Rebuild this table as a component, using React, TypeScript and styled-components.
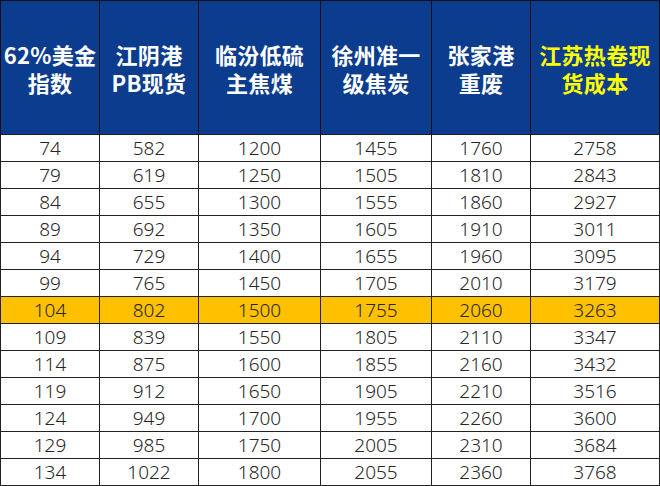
import styled, { createGlobalStyle } from "styled-components";

const GlobalStyle = createGlobalStyle`
  html, body {
    margin: 0;
    padding: 0;
    background: #ffffff;
  }
`;

const headers: string[][] = [
  ["62%美金", "指数"],
  ["江阴港", "PB现货"],
  ["临汾低硫", "主焦煤"],
  ["徐州准一", "级焦炭"],
  ["张家港", "重废"],
  ["江苏热卷现", "货成本"],
];

const widths = [99, 99, 122, 111, 99, 129];

const rows: number[][] = [
  [74, 582, 1200, 1455, 1760, 2758],
  [79, 619, 1250, 1505, 1810, 2843],
  [84, 655, 1300, 1555, 1860, 2927],
  [89, 692, 1350, 1605, 1910, 3011],
  [94, 729, 1400, 1655, 1960, 3095],
  [99, 765, 1450, 1705, 2010, 3179],
  [104, 802, 1500, 1755, 2060, 3263],
  [109, 839, 1550, 1805, 2110, 3347],
  [114, 875, 1600, 1855, 2160, 3432],
  [119, 912, 1650, 1905, 2210, 3516],
  [124, 949, 1700, 1955, 2260, 3600],
  [129, 985, 1750, 2005, 2310, 3684],
  [134, 1022, 1800, 2055, 2360, 3768],
];

const HIGHLIGHT_ROW = 6;

function App() {
  return (
    <>
      <GlobalStyle />
      <Table>
        <colgroup>
          {widths.map((w, i) => (
            <col key={i} style={{ width: w }} />
          ))}
        </colgroup>
        <thead>
          <tr>
            {headers.map((h, i) => (
              <HeadCell key={i} accent={i === headers.length - 1}>
                {h[0]}
                <br />
                {h[1]}
              </HeadCell>
            ))}
          </tr>
        </thead>
        <tbody>
          {rows.map((r, i) => (
            <Row key={i} highlight={i === HIGHLIGHT_ROW}>
              {r.map((v, j) => (
                <Cell key={j}>{v}</Cell>
              ))}
            </Row>
          ))}
        </tbody>
      </Table>
    </>
  );
}

const Table = styled.table`
  border-collapse: collapse;
  table-layout: fixed;
  width: 659px;
  border: 1px solid #111;
`;

const HeadCell = styled.th<{ accent?: boolean }>`
  height: 133px;
  padding: 0;
  background: #0b3c8d;
  color: ${(p) => (p.accent ? "#ffff00" : "#ffffff")};
  border-left: 1px solid #111;
  border-right: 1px solid #111;
  font-family: "Noto Sans CJK SC", "Liberation Sans", sans-serif;
  font-weight: 700;
  font-size: 22px;
  line-height: 28px;
  letter-spacing: 0.3px;
  text-align: center;
  vertical-align: middle;
  white-space: nowrap;
`;

const Row = styled.tr<{ highlight?: boolean }>`
  background: ${(p) => (p.highlight ? "#ffc000" : "#ffffff")};
`;

const Cell = styled.td`
  height: 26px;
  padding: 0;
  border: 1px solid #222;
  color: #262626;
  font-family: "Noto Sans", "Liberation Sans", sans-serif;
  font-weight: 300;
  font-size: 19px;
  line-height: 26px;
  text-align: center;
  vertical-align: middle;
`;

export default App;
